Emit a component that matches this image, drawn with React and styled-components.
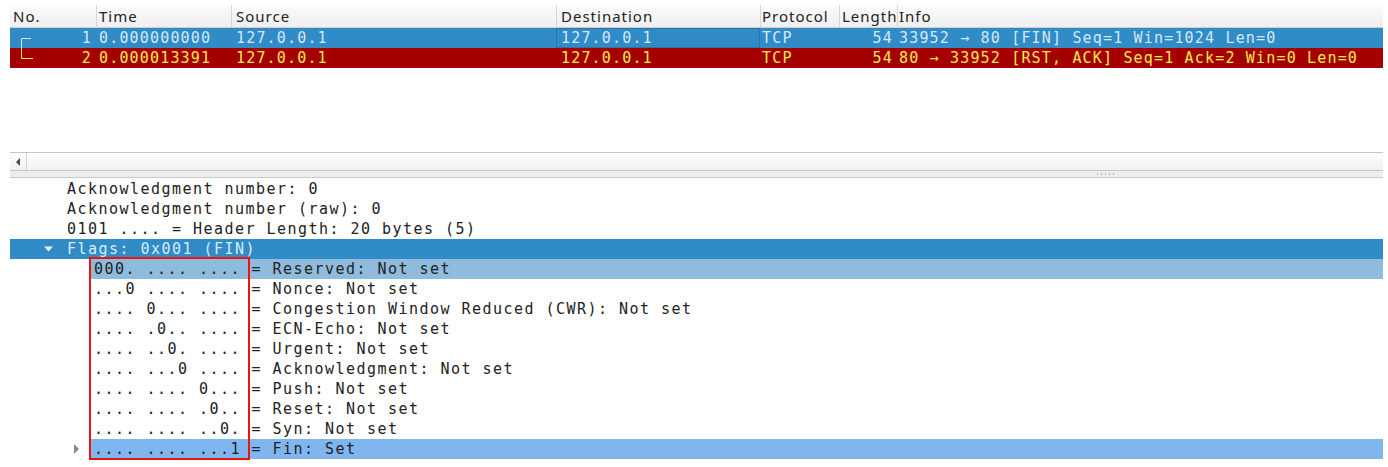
import styled, { createGlobalStyle } from "styled-components";

const GlobalStyle = createGlobalStyle`
    html, body { margin: 0; padding: 0; background: #ffffff; }
    * { box-sizing: border-box; }
`;

const MONO = `"DejaVu Sans Mono", "Liberation Mono", monospace`;
const SANS = `"Noto Sans", "DejaVu Sans", sans-serif`;

const columns = [
    { key: "no", label: "No.", w: "86px", pad: 2, padR: 4, align: "right" },
    { key: "time", label: "Time", w: "135px", pad: 2 },
    { key: "src", label: "Source", w: "325px", pad: 4 },
    { key: "dst", label: "Destination", w: "204px", pad: 4 },
    { key: "proto", label: "Protocol", w: "79px", pad: 1 },
    { key: "len", label: "Length", w: "58px", pad: 2, padR: 4, align: "right" },
    { key: "info", label: "Info", w: "1fr", pad: 1 },
];

const packets = [
    {
        no: 1, time: "0.000000000", src: "127.0.0.1", dst: "127.0.0.1", proto: "TCP", len: 54,
        info: "33952 → 80 [FIN] Seq=1 Win=1024 Len=0",
        bg: "#308bc7", fg: "#d3e9f8", selected: true,
    },
    {
        no: 2, time: "0.000013391", src: "127.0.0.1", dst: "127.0.0.1", proto: "TCP", len: 54,
        info: "80 → 33952 [RST, ACK] Seq=1 Ack=2 Win=0 Len=0",
        bg: "#a40000", fg: "#fce94f",
    },
];

const details = [
    { level: 0, text: "Acknowledgment number: 0" },
    { level: 0, text: "Acknowledgment number (raw): 0" },
    { level: 0, text: "0101 .... = Header Length: 20 bytes (5)" },
    { level: 0, text: "Flags: 0x001 (FIN)", expander: "open", hl: "selected" },
    { level: 1, text: "000. .... .... = Reserved: Not set", hl: "related" },
    { level: 1, text: "...0 .... .... = Nonce: Not set" },
    { level: 1, text: ".... 0... .... = Congestion Window Reduced (CWR): Not set" },
    { level: 1, text: ".... .0.. .... = ECN-Echo: Not set" },
    { level: 1, text: ".... ..0. .... = Urgent: Not set" },
    { level: 1, text: ".... ...0 .... = Acknowledgment: Not set" },
    { level: 1, text: ".... .... 0... = Push: Not set" },
    { level: 1, text: ".... .... .0.. = Reset: Not set" },
    { level: 1, text: ".... .... ..0. = Syn: Not set" },
    { level: 1, text: ".... .... ...1 = Fin: Set", expander: "closed", hl: "focus" },
];

const gridCols = columns.map(c => c.w).join(" ");

function Bracket({ first }) {
    return (
        <BracketSvg width="14" height="20" viewBox="0 0 14 20">
            <path
                d={first ? "M10 10.5 H0.5 V20" : "M0.5 0 V10.5 H12"}
                fill="none"
                stroke="currentColor"
                strokeWidth="1"
            />
        </BracketSvg>
    );
}

function Expander({ state }) {
    if (state === "open") {
        return (
            <svg width="10" height="10" viewBox="0 0 10 10">
                <path d="M0 2.5 H9 L4.5 7.5 Z" fill="#e6f1fa" />
            </svg>
        );
    }
    return (
        <svg width="10" height="12" viewBox="0 0 10 12">
            <path d="M3 1 L8 6 L3 11 Z" fill="#8a8a8a" />
        </svg>
    );
}

export default function App() {
    return (
        <Window>
            <GlobalStyle />
            <PacketPane>
                <HeaderRow>
                    {columns.map((c, i) => (
                        <HeadCell key={c.key} $pad={c.pad} $first={i === 0}>{c.label}</HeadCell>
                    ))}
                </HeaderRow>
                {packets.map((p, idx) => (
                    <PacketRow key={p.no} $bg={p.bg} $fg={p.fg}>
                        {columns.map((c, i) => (
                            <Cell
                                key={c.key}
                                $pad={c.pad}
                                $padR={c.padR}
                                $align={c.align}
                                $first={i === 0}
                                $focus={p.selected && c.key === "dst"}
                            >
                                {c.key === "no" && <Bracket first={idx === 0} />}
                                <span>{p[c.key]}</span>
                            </Cell>
                        ))}
                    </PacketRow>
                ))}
            </PacketPane>
            <HScroll>
                <ScrollButton>
                    <svg width="6" height="8" viewBox="0 0 6 8">
                        <path d="M5 0 V8 L1 4 Z" fill="#4a4a4a" />
                    </svg>
                </ScrollButton>
                <ScrollTrack />
            </HScroll>
            <Splitter>
                <Grip />
            </Splitter>
            <DetailPane>
                {details.map((d, i) => (
                    <DetailRow key={i} $selected={d.hl === "selected"}>
                        <Indent $level={d.level} />
                        <ExpanderBox>{d.expander && <Expander state={d.expander} />}</ExpanderBox>
                        <Item $hl={d.hl}>{d.text}</Item>
                    </DetailRow>
                ))}
                <Marker />
            </DetailPane>
        </Window>
    );
}

const Window = styled.div`
    width: 1388px;
    height: 467px;
    padding: 5px 5px 0 10px;
    overflow: hidden;
    display: flex;
    flex-direction: column;
`;

const PacketPane = styled.div`
    height: 147px;
    display: flex;
    flex-direction: column;
`;

const HeaderRow = styled.div`
    display: grid;
    grid-template-columns: ${gridCols};
    height: 23px;
    background: linear-gradient(#fbfbfb, #efefef);
    border-bottom: 1px solid #cfcfcf;
`;

const HeadCell = styled.div`
    font-family: ${SANS};
    font-size: 15px;
    letter-spacing: 1px;
    color: #222;
    line-height: 22px;
    padding-left: ${p => p.$pad}px;
    border-left: 1px solid ${p => (p.$first ? "transparent" : "#d6d6d6")};
    white-space: nowrap;
    overflow: hidden;
`;

const PacketRow = styled.div`
    display: grid;
    grid-template-columns: ${gridCols};
    height: 20px;
    background: ${p => p.$bg};
    color: ${p => p.$fg};
`;

const Cell = styled.div`
    display: flex;
    align-items: center;
    justify-content: ${p => (p.$first ? "space-between" : p.$align === "right" ? "flex-end" : "flex-start")};
    font-family: ${MONO};
    font-size: 15px;
    letter-spacing: 1.17px;
    padding-left: ${p => p.$pad}px;
    padding-right: ${p => p.$padR || 0}px;
    border: 1px solid ${p => (p.$focus ? "#2676ad" : "transparent")};
    border-width: ${p => (p.$focus ? "1px" : "0 0 0 1px")};
    white-space: pre;
    overflow: hidden;
`;

const BracketSvg = styled.svg`
    margin-left: 8px;
    flex: none;
    align-self: stretch;
    height: 20px;
`;

const HScroll = styled.div`
    display: flex;
    height: 19px;
    border-top: 1px solid #c6c6c6;
    border-bottom: 1px solid #c6c6c6;
    background: linear-gradient(#fdfdfd, #f1f1f1);
`;

const ScrollButton = styled.div`
    width: 17px;
    display: flex;
    align-items: center;
    justify-content: center;
    border-right: 1px solid #d2d2d2;
`;

const ScrollTrack = styled.div`
    flex: 1;
`;

const Splitter = styled.div`
    height: 7px;
    background: #ededed;
    border-bottom: 1px solid #c9c9c9;
    display: flex;
    align-items: center;
    justify-content: flex-end;
    padding-right: 268px;
`;

const Grip = styled.span`
    width: 18px;
    height: 2px;
    background: repeating-linear-gradient(90deg, #b4b4b4 0 1px, transparent 1px 4px);
`;

const DetailPane = styled.div`
    position: relative;
    margin-top: 1px;
    display: flex;
    flex-direction: column;
`;

const DetailRow = styled.div`
    display: flex;
    height: 20px;
    background: ${p => (p.$selected ? "#308bc7" : "transparent")};
    color: ${p => (p.$selected ? "#d6ebf9" : "#222")};
`;

const Indent = styled.div`
    flex: none;
    width: ${p => 30 + p.$level * 27}px;
`;

const ExpanderBox = styled.div`
    flex: none;
    width: 23px;
    display: flex;
    align-items: center;
    padding-left: 4px;
`;

const itemBg = {
    related: "#8fbbdc",
    focus: "#80b6ef",
};

const Item = styled.div`
    flex: 1;
    padding-left: 4px;
    font-family: ${MONO};
    font-size: 15px;
    letter-spacing: 1.47px;
    line-height: 20px;
    white-space: pre;
    background: ${p => itemBg[p.$hl] || "transparent"};
`;

const Marker = styled.div`
    position: absolute;
    left: 79px;
    top: 78px;
    width: 161px;
    height: 203px;
    border: 2px solid #ec1313;
    pointer-events: none;
`;
